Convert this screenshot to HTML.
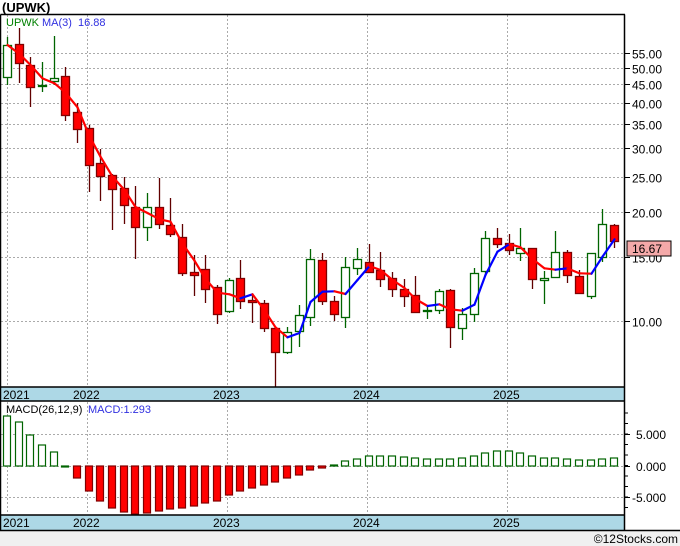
<!DOCTYPE html><html><head><meta charset="utf-8"><style>
body{margin:0;width:680px;height:546px;background:#fff;overflow:hidden;font-family:"Liberation Sans",sans-serif}
svg{display:block}
</style></head><body>
<svg id="s" width="680" height="546" xmlns="http://www.w3.org/2000/svg" font-family="Liberation Sans, sans-serif">
<rect x="0" y="531" width="680" height="15" fill="#f0f0f0"/>
<text x="2" y="12" font-size="13" font-weight="bold" fill="#000">(UPWK)</text>
<g id="grid" stroke="#aaa" stroke-dasharray="2,2" stroke-width="1"></g>
<g id="c"></g>
<rect x="1" y="387" width="624" height="14" fill="#add8e6"/>
<rect x="1" y="515" width="624" height="15" fill="#add8e6"/>
<g stroke="#000" stroke-width="1.5" fill="none">
<path d="M0.5 14.5H625M0.5 14.5V531M624.5 14.5V531M0 387H625M0 401H625M0 515H625M0 530.5H680"/>
</g>
<g font-size="12" fill="#000">
<text x="3" y="399">2021</text><text x="73" y="399">2022</text><text x="213" y="399">2023</text><text x="353" y="399">2024</text><text x="493" y="399">2025</text>
<text x="3" y="527">2021</text><text x="73" y="527">2022</text><text x="213" y="527">2023</text><text x="353" y="527">2024</text><text x="493" y="527">2025</text>
</g>
<text x="6" y="26" font-size="11" fill="#008000">UPWK</text>
<text x="42" y="26" font-size="11" fill="#3030e0">MA(3)</text>
<text x="78" y="26" font-size="11" fill="#3030e0">16.88</text>
<text x="6" y="413" font-size="11" fill="#000">MACD(26,12,9)</text>
<text x="88" y="413" font-size="11" fill="#3030e0">MACD:1.293</text>
<g id="ax" font-size="12" fill="#000"></g>
<rect x="627" y="241" width="44" height="15" fill="#f4a9a9" stroke="#000"/>
<text x="632" y="253" font-size="12" fill="#000">16.67</text>
<text x="678" y="543" font-size="12" fill="#000" text-anchor="end">©12Stocks.com</text>
</svg>
<script>
var NS="http://www.w3.org/2000/svg";
function el(p,t,a){var e=document.createElementNS(NS,t);for(var k in a)e.setAttribute(k,a[k]);p.appendChild(e);return e;}
var g=document.getElementById('grid'),c=document.getElementById('c'),ax=document.getElementById('ax');
function py(p){return 321-157.25*Math.log(p/10);}
[55,50,45,40,35,30,25,20,15,10].forEach(function(p){var y=Math.round(py(p))+0.5;el(g,'line',{x1:1,x2:624,y1:y,y2:y});el(ax,'line',{x1:624,x2:630,y1:y,y2:y,stroke:'#000'});var t=el(ax,'text',{x:632,y:y+5});t.textContent=p.toFixed(2);});
[7,87,227,367,507].forEach(function(x){el(g,'line',{x1:x+.5,x2:x+.5,y1:15,y2:386});el(g,'line',{x1:x+.5,x2:x+.5,y1:402,y2:514});});
[434,466,497].forEach(function(y){el(g,'line',{x1:1,x2:624,y1:y+.5,y2:y+.5});});
[[434,'5.000'],[466,'0.000'],[497,'-5.000']].forEach(function(a){el(ax,'line',{x1:624,x2:630,y1:a[0]+.5,y2:a[0]+.5,stroke:'#000'});var t=el(ax,'text',{x:a[1][0]=='-'?632:636,y:a[0]+5});t.textContent=a[1];});
for(var y=413;y<515;y+=10.5)el(ax,'line',{x1:624,x2:628,y1:y,y2:y,stroke:'#000'});
var C=[[37,45,77,85,1],[28,44,63,83,0],[57,65,87,107,0],[62,85,86,92,1],[36,78,81,85,1],[67,76,115,121,0],[103,112,129,143,0],[125,128,165,192,0],[149,163,176,201,0],[174,175,189,230,0],[177,188,205,224,0],[186,207,227,259,0],[193,207,227,241,1],[178,207,224,229,0],[198,225,234,237,0],[224,237,273,276,0],[255,272,275,296,0],[255,269,289,303,0],[285,287,314,324,0],[278,280,311,313,1],[260,278,301,309,0],[294,300,302,323,0],[300,303,328,332,0],[327,328,352,387,0],[327,332,352,354,1],[305,315,331,347,1],[249,259,317,326,1],[253,260,301,305,0],[296,301,314,321,0],[257,267,317,328,1],[248,259,268,275,1],[244,262,272,273,0],[252,270,279,287,0],[272,278,289,297,0],[279,289,296,307,0],[276,295,312,313,0],[305,310,311,319,1],[289,291,310,314,1],[289,290,327,348,0],[308,314,328,340,1],[268,273,314,322,1],[231,238,271,276,1],[228,238,244,248,0],[234,243,250,255,0],[228,248,253,261,1],[248,248,279,289,0],[271,278,280,304,1],[231,252,277,278,1],[250,252,275,283,0],[270,276,293,294,0],[253,253,296,299,1],[209,224,257,262,1],[224,225,241,248,0]];
var M=[416,422,435,445,452,466,478,491,501,508,512,514,513,511,509,508,506,503,501,495,491,488,485,482,478,475,470,468,465,461,459,456,456,456,457,458,459,459,459,458,456,453,451,451,453,456,458,458,459,460,460,459,458];
var closes=[];
C.forEach(function(d,i){var x=Math.round(7+11.67*i);var col=d[4]?'#006400':'#600000';
el(c,'line',{x1:x+.5,x2:x+.5,y1:d[0],y2:d[3],stroke:col,'stroke-width':1.3});
el(c,'rect',{x:x-3.5,y:d[1]+.5,width:8,height:Math.max(1,d[2]-d[1]),fill:d[4]?'#fff':'#f00',stroke:d[4]?'#006400':'#800000','stroke-width':1.3});
closes.push(d[4]?d[1]:d[2]);
var m=M[i];var pos=m<=466;el(c,'rect',{x:x-3.5,y:pos?m:466,width:7,height:Math.max(1,Math.abs(466-m)),fill:pos?'#fff':'#f00',stroke:pos?'#006400':'#800000','stroke-width':1.2});
});
var prev=null;closes.forEach(function(cl,i){var a=i==0?[cl]:(i==1?[closes[0],cl]:[closes[i-2],closes[i-1],cl]);var my=a.reduce(function(s,v){return s+v},0)/a.length;var x=Math.round(7+11.67*i)+.5;
if(prev){el(c,'line',{x1:prev[0],y1:prev[1],x2:x,y2:my,stroke:my<prev[1]?'#0000ff':'#ff0000','stroke-width':2.2,'stroke-linecap':'round'});}prev=[x,my];});
</script>
</body></html>
